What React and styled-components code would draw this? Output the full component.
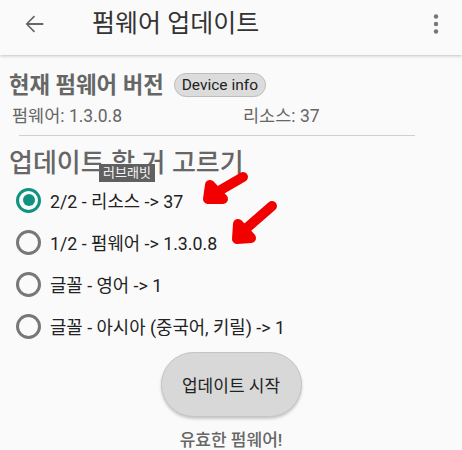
import React from "react";
import styled, { createGlobalStyle } from "styled-components";

const GlobalStyle = createGlobalStyle`
  body {
    margin: 0;
    background: #fafafa;
    font-family: Roboto, "Noto Sans CJK KR", sans-serif;
  }
`;

const options = [
  { id: "res", label: "2/2 - 리소스 -> 37" },
  { id: "fw", label: "1/2 - 펌웨어 -> 1.3.0.8" },
  { id: "en", label: "글꼴 - 영어 -> 1" },
  { id: "asia", label: "글꼴 - 아시아 (중국어, 키릴) -> 1" },
];

export default function App() {
  const [selected, setSelected] = React.useState("res");

  return (
    <Page>
      <GlobalStyle />
      <Toolbar>
        <IconButton aria-label="back">
          <svg width="28" height="28" viewBox="0 0 24 24">
            <path
              fill="#666"
              d="M20 11.2H7.5l5.4-5.4-1-1L4.8 12l7.1 7.2 1-1-5.4-5.4H20z"
            />
          </svg>
        </IconButton>
        <Title>펌웨어 업데이트</Title>
        <MenuButton aria-label="more">
          <svg width="24" height="24" viewBox="0 0 24 24">
            <circle cx="12" cy="4.5" r="2.2" fill="#777" />
            <circle cx="12" cy="12" r="2.2" fill="#777" />
            <circle cx="12" cy="19.5" r="2.2" fill="#777" />
          </svg>
        </MenuButton>
      </Toolbar>

      <Content>
        <HeadingRow>
          <Heading>현재 펌웨어 버전</Heading>
          <Chip>Device info</Chip>
        </HeadingRow>
        <InfoRow>
          <span>펌웨어: 1.3.0.8</span>
          <span>리소스: 37</span>
        </InfoRow>
        <Divider />

        <PickTitle>업데이트 할 거 고르기</PickTitle>
        <Tooltip>러브래빗</Tooltip>

        <RadioList>
          {options.map((o) => (
            <RadioRow key={o.id} onClick={() => setSelected(o.id)}>
              <Radio $checked={selected === o.id} />
              <span>{o.label}</span>
            </RadioRow>
          ))}
        </RadioList>

        <Scribble width="462" height="450" viewBox="0 0 462 450">
          <g
            fill="#f20000"
            stroke="#f20000"
            strokeWidth="10"
            strokeLinecap="round"
            strokeLinejoin="round"
          >
            <path d="M243 177 L212 195" />
            <path d="M210 185 L208 199 L223 199 Z" />
            <path d="M272 206 L241 233" />
            <path d="M238 224 L237 239 L251 238 Z" />
          </g>
        </Scribble>

        <Footer>
          <StartButton>업데이트 시작</StartButton>
          <Status>유효한 펌웨어!</Status>
        </Footer>
      </Content>
    </Page>
  );
}

const Page = styled.div`
  width: 462px;
  height: 450px;
  overflow: hidden;
  background: #fafafa;
`;

const Toolbar = styled.header`
  height: 55px;
  box-sizing: border-box;
  padding-bottom: 8px;
  display: flex;
  align-items: center;
  background: #fafafa;
  box-shadow: 0 1px 3px rgba(0, 0, 0, 0.22);
  position: relative;
  z-index: 1;
`;

const IconButton = styled.button`
  border: 0;
  background: none;
  padding: 0;
  margin-left: 20px;
  display: flex;
`;

const Title = styled.h1`
  margin: 0 0 0 44px;
  font-size: 25px;
  line-height: 28px;
  font-weight: 400;
  color: #333;
  flex: 1;
`;

const MenuButton = styled(IconButton)`
  margin: 0 14px 0 0;
`;

const Content = styled.main`
  position: relative;
  padding: 17px 0 0 9px;
`;

const HeadingRow = styled.div`
  display: flex;
  align-items: center;
  gap: 10px;
  height: 26px;
`;

const Heading = styled.h2`
  margin: 0;
  font-size: 22.3px;
  line-height: 26px;
  font-weight: 700;
  color: #666;
`;

const Chip = styled.span`
  font-size: 15.5px;
  line-height: 20px;
  color: #222;
  background: #dcdcdc;
  border: 1px solid #bdbdbd;
  border-radius: 13px;
  padding: 1px 7px;
`;

const InfoRow = styled.div`
  display: grid;
  grid-template-columns: 231px auto;
  margin-top: 8px;
  padding-left: 3px;
  font-size: 17.5px;
  line-height: 20px;
  color: #666;
`;

const Divider = styled.hr`
  margin: 9px 47px 0 10px;
  border: 0;
  border-top: 1px solid #d0d0d0;
`;

const PickTitle = styled.h3`
  margin: 13px 0 0;
  font-size: 26px;
  line-height: 28px;
  font-weight: 500;
  color: #666;
`;

const Tooltip = styled.div`
  position: absolute;
  left: 99px;
  top: 109px;
  background: #606060;
  color: #f4f4f4;
  font-size: 13px;
  line-height: 18px;
  padding: 0 4px;
`;

const RadioList = styled.div`
  margin-top: 2px;
  display: flex;
  flex-direction: column;
`;

const RadioRow = styled.label`
  display: flex;
  align-items: center;
  gap: 9px;
  height: 42px;
  padding-left: 7px;
  font-size: 17.8px;
  color: #222;
  cursor: pointer;
`;

const Radio = styled.span`
  width: 19px;
  height: 19px;
  border-radius: 50%;
  border: 3px solid ${(p) => (p.$checked ? "#109282" : "#777")};
  position: relative;
  flex: none;

  &::after {
    content: "";
    display: ${(p) => (p.$checked ? "block" : "none")};
    position: absolute;
    inset: 3.5px;
    border-radius: 50%;
    background: #109282;
  }
`;

const Scribble = styled.svg`
  position: absolute;
  left: 0;
  top: -55px;
  pointer-events: none;
`;

const Footer = styled.div`
  display: flex;
  flex-direction: column;
  align-items: center;
  margin-left: -9px;
  margin-top: 5px;
`;

const StartButton = styled.button`
  width: 141px;
  height: 65px;
  border-radius: 33px;
  border: 1px solid #c4c4c4;
  background: #d8d8d8;
  box-shadow: 0 2px 3px rgba(0, 0, 0, 0.2);
  font-family: inherit;
  font-size: 17px;
  color: #222;
`;

const Status = styled.div`
  margin-top: 13px;
  font-size: 17px;
  line-height: 20px;
  font-weight: 500;
  color: #666;
`;
